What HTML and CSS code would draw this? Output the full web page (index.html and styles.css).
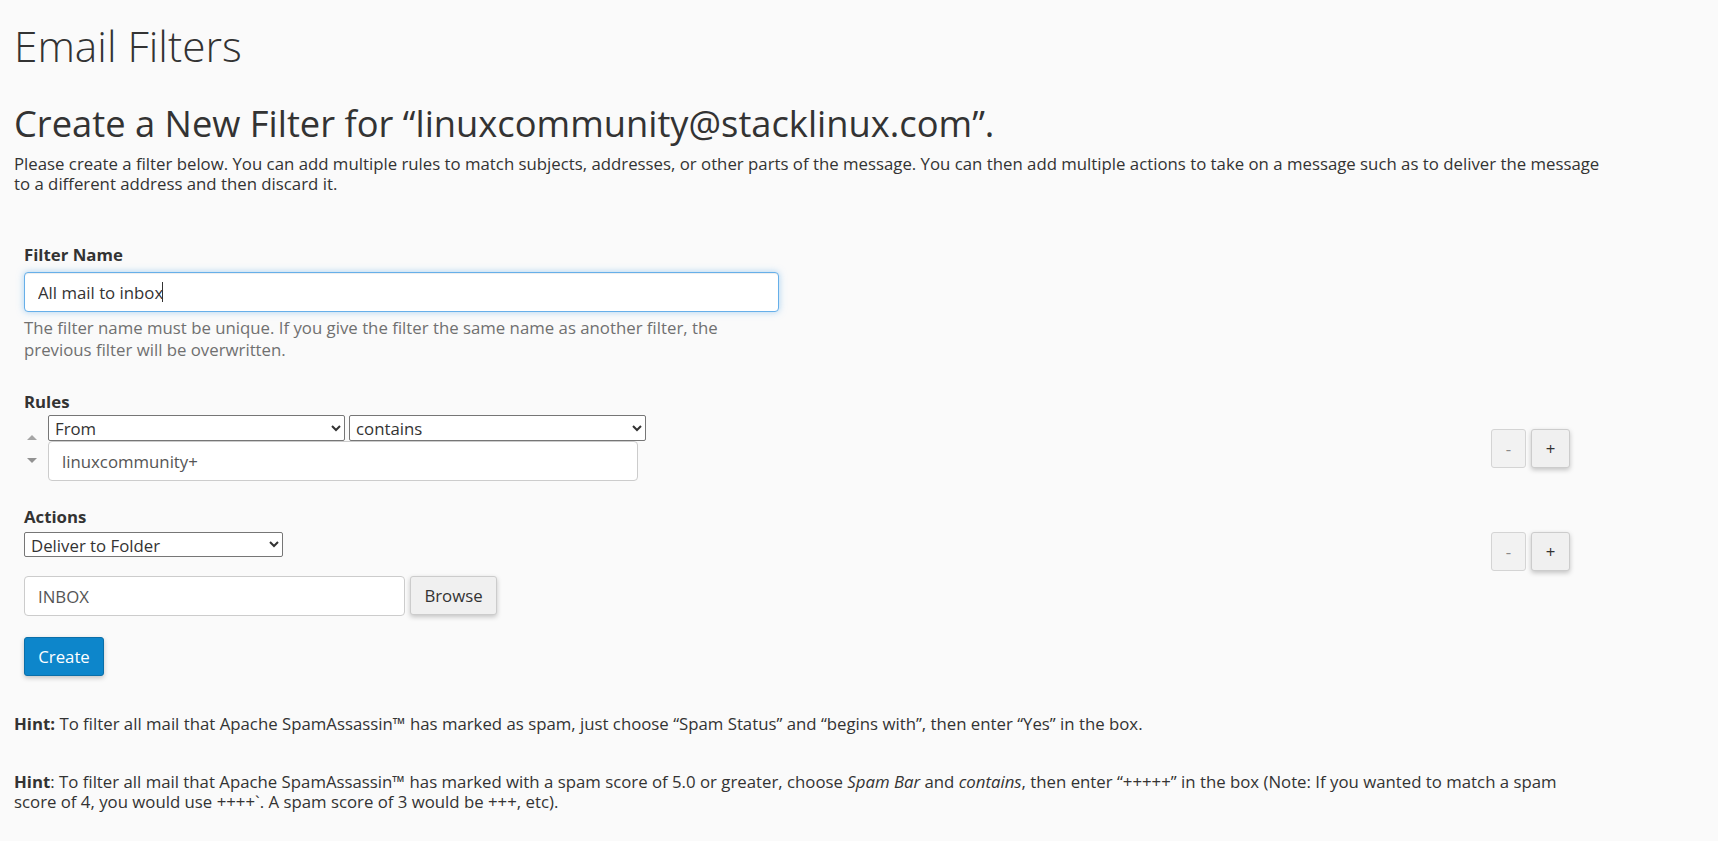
FILE: index.html
```html
<!DOCTYPE html>
<html lang="en">
<head>
<meta charset="utf-8">
<title>Email Filters</title>
<link rel="stylesheet" href="styles.css">
</head>
<body>
<div class="page">
  <h1 class="title">Email Filters</h1>
  <h2 class="heading">Create a New Filter for “linuxcommunity@stacklinux.com”.</h2>
  <p class="intro">Please create a filter below. You can add multiple rules to match subjects, addresses, or other parts of the message. You can then add multiple actions to take on a message such as to deliver the message to a different address and then discard it.</p>

  <form class="filter-form">
    <div class="name-field">
      <label class="label name-label" for="filter-name">Filter Name</label>
      <div class="input-wrap">
        <input id="filter-name" class="text-input name-input" type="text" value="All mail to inbox">
        <span class="caret"></span>
      </div>
      <p class="help">The filter name must be unique. If you give the filter the same name as another filter, the previous filter will be overwritten.</p>
    </div>

    <div class="rules-section">
      <div class="label">Rules</div>
      <div class="row row-center">
        <div class="rule">
          <div class="order">
            <svg class="arrow arrow-up" width="10" height="5" viewBox="0 0 10 5"><polygon points="5,0 10,5 0,5" fill="#a5a5a5"/></svg>
            <svg class="arrow arrow-down" width="10" height="5" viewBox="0 0 10 5"><polygon points="0,0 10,0 5,5" fill="#929292"/></svg>
          </div>
          <div class="rule-fields">
            <div class="selects">
              <select class="select rule-select"><option>From</option></select>
              <select class="select rule-select"><option>contains</option></select>
            </div>
            <input class="text-input rule-value" type="text" value="linuxcommunity+">
          </div>
        </div>
        <div class="pm">
          <button type="button" class="btn btn-minus">-</button>
          <button type="button" class="btn btn-plus">+</button>
        </div>
      </div>
    </div>

    <div class="actions-section">
      <div class="label">Actions</div>
      <div class="row row-top">
        <div class="action">
          <select class="select action-select"><option>Deliver to Folder</option></select>
          <div class="folder-row">
            <input class="text-input folder-input" type="text" value="INBOX">
            <button type="button" class="btn btn-browse">Browse</button>
          </div>
        </div>
        <div class="pm">
          <button type="button" class="btn btn-minus">-</button>
          <button type="button" class="btn btn-plus">+</button>
        </div>
      </div>
    </div>

    <button type="button" class="btn btn-primary">Create</button>
  </form>

  <p class="hint hint-first"><strong>Hint:</strong> To filter all mail that Apache SpamAssassin™ has marked as spam, just choose “Spam Status” and “begins with”, then enter “Yes” in the box.</p>
  <p class="hint hint-second"><strong>Hint</strong>: To filter all mail that Apache SpamAssassin™ has marked with a spam score of 5.0 or greater, choose <em>Spam Bar</em> and <em>contains</em>, then enter “+++++” in the box (Note: If you wanted to match a spam score of 4, you would use ++++`. A spam score of 3 would be +++, etc).</p>
</div>
</body>
</html>
```

FILE: styles.css
```css
html, body {
  margin: 0;
  padding: 0;
}

body {
  background: #fafafa;
  font-family: "Open Sans", "Liberation Sans", sans-serif;
  font-size: 16.8px;
  line-height: 20px;
  color: #333333;
}

.page {
  width: 1600px;
  padding: 21px 0 40px 14px;
}

.title {
  margin: 0;
  font-size: 42.4px;
  line-height: 50px;
  font-weight: 300;
  color: #333333;
}

.heading {
  margin: 32px 0 0;
  font-size: 36.3px;
  line-height: 40px;
  font-weight: 400;
  color: #333333;
}

.intro {
  margin: 11px 0 0;
  line-height: 20px;
}

.filter-form {
  margin-top: 50px;
  padding: 0 44px 0 10px;
}

.label {
  display: block;
  font-weight: 700;
  line-height: 21px;
}

.name-field {
  width: 755px;
}

.name-label {
  margin-bottom: 7px;
}

.input-wrap {
  position: relative;
  width: 755px;
}

.caret {
  position: absolute;
  left: 138px;
  top: 10px;
  width: 1px;
  height: 20px;
  background: #333333;
}

.text-input {
  box-sizing: border-box;
  height: 40px;
  padding: 0 13px;
  border: 1px solid #cccccc;
  border-radius: 4px;
  background: #ffffff;
  font-family: "Open Sans", "Liberation Sans", sans-serif;
  font-size: 16.8px;
  color: #555555;
  outline: none;
}

.name-input {
  display: block;
  width: 755px;
  border-color: #66afe9;
  color: #333333;
  box-shadow: inset 0 1px 1px rgba(0, 0, 0, 0.075), 0 0 7px rgba(102, 175, 233, 0.55);
}

.help {
  margin: 5px 0 0;
  line-height: 22px;
  color: #707070;
}

.rules-section {
  margin-top: 30px;
}

.rules-section .label {
  margin-bottom: 3px;
}

.row {
  display: flex;
  justify-content: space-between;
}

.row-center {
  align-items: center;
}

.row-top {
  align-items: flex-start;
}

.rule {
  display: flex;
}

.order {
  width: 24px;
  display: flex;
  flex-direction: column;
  align-items: flex-start;
  padding: 20px 0 0 3px;
  box-sizing: border-box;
}

.arrow {
  display: block;
}

.arrow-down {
  margin-top: 18px;
}

.rule-fields {
  display: flex;
  flex-direction: column;
}

.selects {
  display: flex;
  gap: 4px;
}

.select {
  box-sizing: border-box;
  height: 26px;
  padding: 0 2px;
  font-family: "Open Sans", "Liberation Sans", sans-serif;
  font-size: 16.8px;
  color: #333333;
  background-color: #ffffff;
  border: 1px solid #767676;
  border-radius: 2px;
}

.rule-select {
  width: 297px;
}

.rule-value {
  width: 590px;
}

.pm {
  display: flex;
  gap: 5px;
}

.btn {
  box-sizing: border-box;
  height: 39px;
  padding: 0 12px;
  border: 1px solid #cccccc;
  border-radius: 3px;
  background: #f0f0f0;
  font-family: "Open Sans", "Liberation Sans", sans-serif;
  font-size: 16.8px;
  color: #333333;
  box-shadow: 0 2px 5px rgba(0, 0, 0, 0.22);
  cursor: pointer;
}

.btn-minus {
  width: 35px;
  padding: 0;
  background: #f2f2f2;
  color: #8a8a8a;
  box-shadow: none;
  border-color: #d4d4d4;
}

.btn-plus {
  width: 39px;
  padding: 0;
}

.actions-section {
  margin-top: 25px;
}

.actions-section .label {
  margin-bottom: 5px;
}

.action-select {
  display: block;
  width: 259px;
  height: 25px;
}

.folder-row {
  display: flex;
  gap: 5px;
  margin-top: 19px;
}

.folder-input {
  width: 381px;
}

.btn-browse {
  width: 87px;
  height: 39px;
}

.btn-primary {
  display: block;
  margin-top: 21px;
  width: 80px;
  padding: 0;
  background: #0d86cb;
  border-color: #0a6fa9;
  color: #ffffff;
}

.hint {
  margin: 0;
  max-width: 1575px;
  line-height: 20px;
}

.hint-first {
  margin-top: 38px;
}

.hint-second {
  margin-top: 38px;
}
```
